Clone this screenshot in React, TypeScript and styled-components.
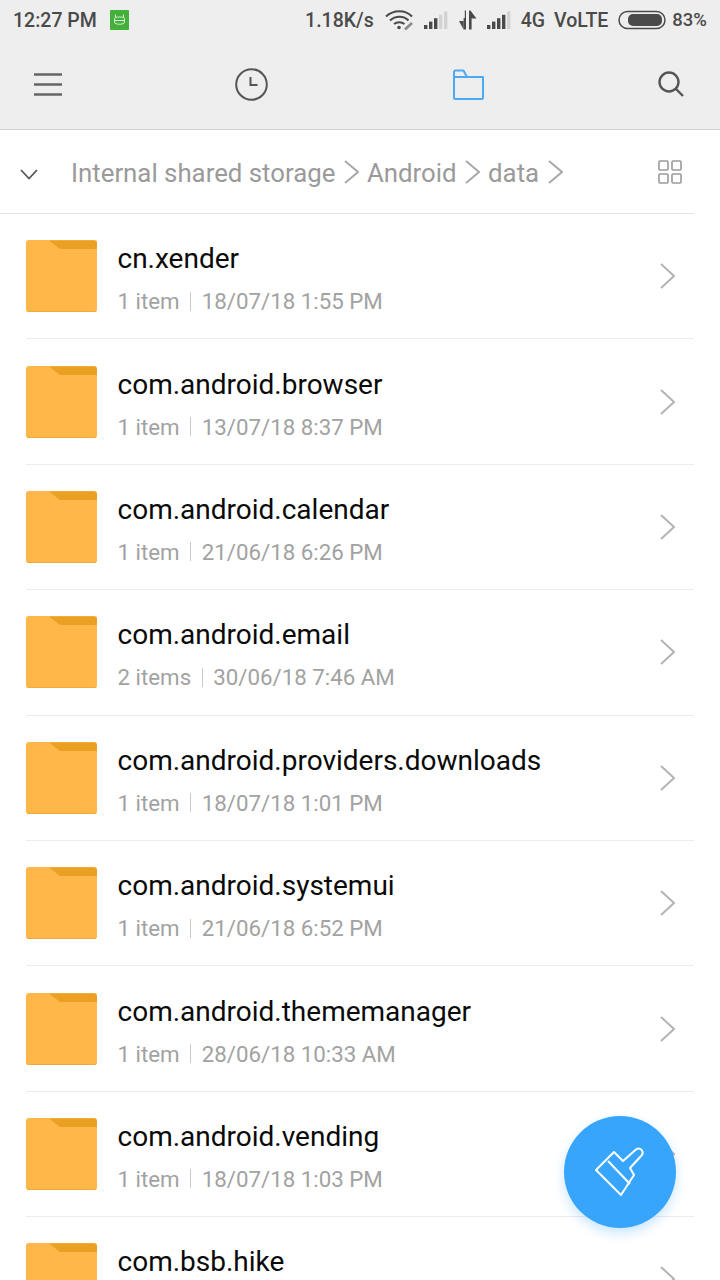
import React from 'react';
import styled, { createGlobalStyle } from 'styled-components';

const GlobalStyle = createGlobalStyle`
  * { box-sizing: border-box; }
  html, body { margin: 0; padding: 0; background: #fff; }
  body { font-family: Roboto, "Liberation Sans", sans-serif; }
`;

const Page = styled.div`
  position: relative;
  width: 720px;
  height: 1280px;
  overflow: hidden;
  background: #fff;
`;

const Header = styled.header`
  background: #eeeeee;
  height: 130px;
  border-bottom: 1px solid #d4d4d4;
`;

const StatusBar = styled.div`
  height: 42px;
  padding: 0 13px 2px 13px;
  display: flex;
  align-items: center;
  font-size: 19.5px;
  font-weight: 500;
  color: #4a4a4a;
`;

const StatusItem = styled.span<{ $left?: number; $size?: number }>`
  display: flex;
  align-items: center;
  margin-left: ${(p) => p.$left ?? 0}px;
  ${(p) => (p.$size ? `font-size: ${p.$size}px;` : '')}
`;

const StatusRight = styled.div`
  margin-left: auto;
  display: flex;
  align-items: center;
`;

const Toolbar = styled.div`
  height: 87px;
  padding: 0 0 3px 34px;
  display: flex;
  align-items: center;
`;

const ToolIcon = styled.span<{ $left?: number }>`
  display: flex;
  margin-left: ${(p) => p.$left ?? 0}px;
`;

const Crumbs = styled.div`
  height: 84px;
  margin-right: 26px;
  display: flex;
  align-items: center;
  border-bottom: 1px solid #e4e4e4;
`;

const CrumbLabel = styled.span`
  padding-top: 2px;
  font-size: 25.8px;
  color: #9a9a9a;
`;

const CrumbToggle = styled.div`
  width: 71px;
  padding: 6px 0 0 20px;
  display: flex;
  align-items: center;
`;

const GridButton = styled.div`
  margin-left: auto;
  margin-right: 12px;
  display: flex;
`;

const Divider = styled.span`
  margin: 0 8px 0 8.5px;
  display: flex;
`;

const Row = styled.div`
  height: 125.4px;
  margin: 0 26px;
  display: flex;
  align-items: center;
  border-bottom: 1px solid #ececec;
`;

const Info = styled.div`
  margin: 5px 0 0 19.5px;
  display: flex;
  flex-direction: column;
  gap: 13px;
`;

const Title = styled.div`
  font-size: 28px;
  line-height: 32px;
  color: #0a0a0a;
`;

const Meta = styled.div`
  display: flex;
  align-items: center;
  min-height: 26px;
  font-size: 22.3px;
  line-height: 26px;
  color: #a2a2a2;
`;

const MetaBar = styled.span`
  width: 1px;
  height: 19px;
  margin: 0 10.5px;
  background: #c8c8c8;
`;

const RowArrow = styled.div`
  margin-left: auto;
  margin-right: 19px;
  display: flex;
`;

const Fab = styled.div`
  position: absolute;
  left: 564px;
  top: 1116px;
  width: 112px;
  height: 112px;
  border-radius: 50%;
  background: #38a5fc;
  box-shadow: 0 5px 12px rgba(56, 165, 252, 0.28);
  display: flex;
  align-items: center;
  justify-content: center;
`;

const Chevron = ({ w, h, color, sw = 2 }: { w: number; h: number; color: string; sw?: number }) => (
  <svg width={w} height={h} viewBox={`0 0 ${w} ${h}`} fill="none">
    <path d={`M1 1L${w - 1} ${h / 2}L1 ${h - 1}`} stroke={color} strokeWidth={sw} />
  </svg>
);

const FolderIcon = () => (
  <svg width="72" height="72" viewBox="0 0 72 72">
    <rect x="0" y="0" width="71" height="72" rx="3" fill="#ffb74a" />
    <path d="M23 0.5H68a3 3 0 0 1 3 3V9H34Z" fill="#eba024" />
    <path d="M0 69a3 3 0 0 0 3 3H68a3 3 0 0 0 3 -3a3 2 0 0 1 -3 2H3a3 2 0 0 1 -3 -2Z" fill="#f1a93c" />
  </svg>
);

const Signal = ({ level }: { level: number }) => (
  <svg width="25" height="18" viewBox="0 0 25 18">
    {[0, 1, 2, 3, 4].map((i) => (
      <rect
        key={i}
        x={i * 5}
        y={14 - i * 3.4}
        width="3.4"
        height={4 + i * 3.4}
        fill={i < level ? '#4a4a4a' : '#d2d2d2'}
      />
    ))}
  </svg>
);

// last row runs off the bottom of the screen, its second line is not visible
const files = [
  ['cn.xender', '1 item', '18/07/18 1:55 PM'],
  ['com.android.browser', '1 item', '13/07/18 8:37 PM'],
  ['com.android.calendar', '1 item', '21/06/18 6:26 PM'],
  ['com.android.email', '2 items', '30/06/18 7:46 AM'],
  ['com.android.providers.downloads', '1 item', '18/07/18 1:01 PM'],
  ['com.android.systemui', '1 item', '21/06/18 6:52 PM'],
  ['com.android.thememanager', '1 item', '28/06/18 10:33 AM'],
  ['com.android.vending', '1 item', '18/07/18 1:03 PM'],
  ['com.bsb.hike', '', ''],
];

export default function App() {
  return (
    <Page>
      <GlobalStyle />
      <Header>
        <StatusBar>
          <span>12:27 PM</span>
          <StatusItem $left={13}>
            <svg width="19" height="20" viewBox="0 0 19 20">
              <rect width="19" height="20" rx="1" fill="#45b03c" />
              <path d="M5.5 7V4.5M13.5 7V4.5M4.5 8.5C4.5 6.5 14.5 6.5 14.5 8.5V12C14.5 15 4.5 15 4.5 12ZM4.5 10.5H14.5" fill="none" stroke="#d6f0d2" strokeWidth="1" />
            </svg>
          </StatusItem>
          <StatusRight>
            <span>1.18K/s</span>
            <StatusItem $left={11}>
              <svg width="29" height="20" viewBox="0 0 29 20" fill="none" stroke="#4a4a4a" strokeWidth="2">
                <path d="M1 6.5C8.5 -0.5 20.5 -0.5 27 6.5" />
                <path d="M5 10.5C10.5 5.5 18.5 5.5 23.5 10.5" />
                <path d="M9 14C12 11.5 16.5 11.5 19.5 14" />
                <circle cx="14" cy="17.5" r="1.8" fill="#4a4a4a" stroke="none" />
                <path d="M20 19.5L27 13" strokeWidth="2.6" stroke="#8a8a8a" />
              </svg>
            </StatusItem>
            <StatusItem $left={10}><Signal level={3} /></StatusItem>
            <StatusItem $left={9}>
              <svg width="19" height="20" viewBox="0 0 19 20" fill="#4a4a4a">
                <path d="M5.6 19.5V8H1L6.8 8V0.5H8V19.5Z" />
                <path d="M11 0.5H12.4L18.5 8.5H13.6V19.5H11Z" />
                <path d="M1 11H5.6V19.5Z" />
              </svg>
            </StatusItem>
            <StatusItem $left={10}><Signal level={4} /></StatusItem>
            <StatusItem $left={9}>4G</StatusItem>
            <StatusItem $left={9}>VoLTE</StatusItem>
            <StatusItem $left={10}>
              <svg width="48" height="20" viewBox="0 0 48 20">
                <rect x="1" y="1.5" width="46" height="17" rx="8.5" fill="none" stroke="#4a4a4a" strokeWidth="1.5" />
                <rect x="10" y="4" width="34" height="12" rx="5" fill="#4a4a4a" />
              </svg>
            </StatusItem>
            <StatusItem $left={6} $size={18.5}>83%</StatusItem>
          </StatusRight>
        </StatusBar>
        <Toolbar>
          <ToolIcon>
            <svg width="28" height="23" viewBox="0 0 28 23" fill="none" stroke="#666" strokeWidth="2.4">
              <path d="M0 1.5H28M0 11.5H28M0 21.5H28" />
            </svg>
          </ToolIcon>
          <ToolIcon $left={173}>
            <svg width="33" height="33" viewBox="0 0 33 33" fill="none" stroke="#555" strokeWidth="2">
              <circle cx="16.5" cy="16.5" r="15.3" />
              <path d="M15.5 9V17H22.5" />
            </svg>
          </ToolIcon>
          <ToolIcon $left={185}>
            <svg width="31" height="31" viewBox="0 0 31 31" fill="none" stroke="#4ba9f5" strokeWidth="2">
              <path d="M1 5V28.5A1.5 1.5 0 0 0 2.5 30H28.5A1.5 1.5 0 0 0 30 28.5V8H14L10.5 1.5H2.5A1.5 1.5 0 0 0 1 3Z" strokeLinejoin="round" />
              <path d="M1 8H14" />
            </svg>
          </ToolIcon>
          <ToolIcon $left={174}>
            <svg width="26" height="26" viewBox="0 0 26 26" fill="none" stroke="#555" strokeWidth="2.4">
              <circle cx="11" cy="11" r="9.5" />
              <path d="M18 18L25 25" />
            </svg>
          </ToolIcon>
        </Toolbar>
      </Header>
      <Crumbs>
        <CrumbToggle>
          <svg width="18" height="11" viewBox="0 0 18 11" fill="none" stroke="#555" strokeWidth="1.8">
            <path d="M1 1L9 9.5L17 1" />
          </svg>
        </CrumbToggle>
        <CrumbLabel>Internal shared storage</CrumbLabel>
        <Divider><Chevron w={15} h={24} color="#a8a8a8" /></Divider>
        <CrumbLabel>Android</CrumbLabel>
        <Divider><Chevron w={15} h={24} color="#a8a8a8" /></Divider>
        <CrumbLabel>data</CrumbLabel>
        <Divider><Chevron w={15} h={24} color="#a8a8a8" /></Divider>
        <GridButton>
          <svg width="24" height="24" viewBox="0 0 24 24" fill="none" stroke="#9a9a9a" strokeWidth="1.6">
            <rect x="1" y="1" width="9" height="9" rx="1" />
            <rect x="14" y="1" width="9" height="9" rx="1" />
            <rect x="1" y="14" width="9" height="9" rx="1" />
            <rect x="14" y="14" width="9" height="9" rx="1" />
          </svg>
        </GridButton>
      </Crumbs>
      {files.map(([name, count, date]) => (
        <Row key={name}>
          <FolderIcon />
          <Info>
            <Title>{name}</Title>
            <Meta>
              {count}
              {count && <MetaBar />}
              {date}
            </Meta>
          </Info>
          <RowArrow><Chevron w={15} h={26} color="#b4b4b4" /></RowArrow>
        </Row>
      ))}
      <Fab>
        <svg width="50" height="50" viewBox="0 0 50 50" fill="none" stroke="#fff" strokeWidth="2" strokeLinejoin="round">
          <path d="M1 23L19 5L28 14L41 2.5C43 1 45.5 1.5 46.8 3.2C48 5 47.8 7 46.5 8.5L35 21L39 28L26 48Z" />
          <path d="M13 14L35 37" />
        </svg>
      </Fab>
    </Page>
  );
}
